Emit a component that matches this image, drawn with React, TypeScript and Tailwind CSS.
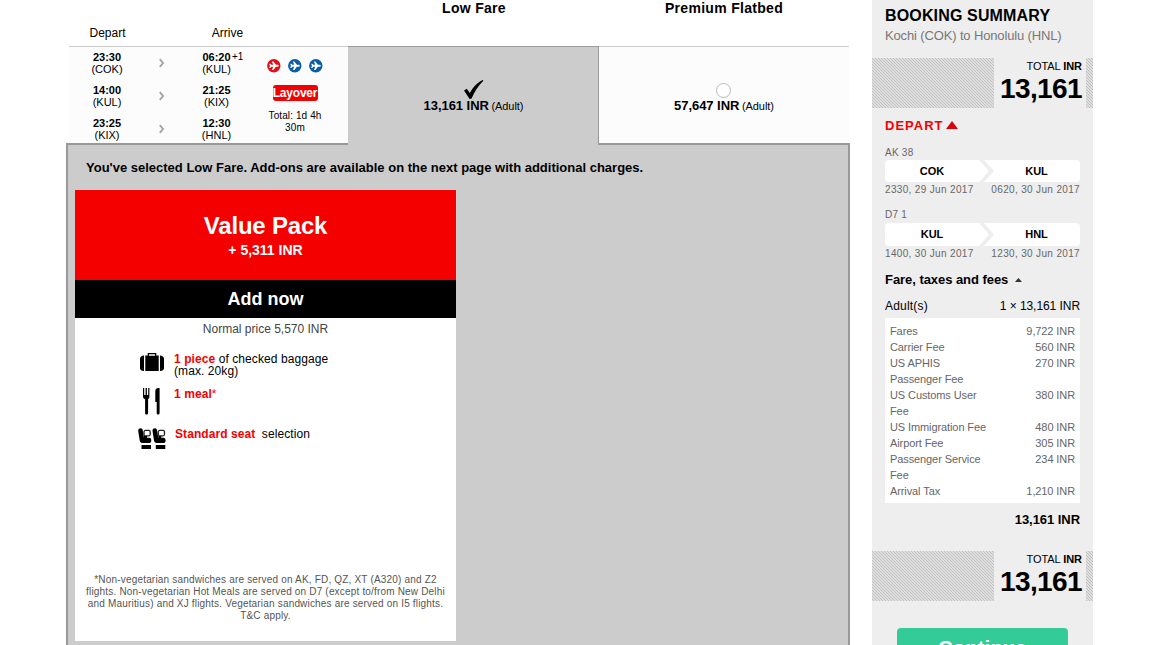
import React from 'react';
import clsx from 'clsx';

const FLIGHTS = [
  { depart: '23:30', from: '(COK)', arrive: '06:20', to: '(KUL)', extra: '+1' },
  { depart: '14:00', from: '(KUL)', arrive: '21:25', to: '(KIX)' },
  { depart: '23:25', from: '(KIX)', arrive: '12:30', to: '(HNL)' },
];

const FEES = [
  ['Fares', '9,722 INR'],
  ['Carrier Fee', '560 INR'],
  ['US APHIS Passenger Fee', '270 INR'],
  ['US Customs User Fee', '380 INR'],
  ['US Immigration Fee', '480 INR'],
  ['Airport Fee', '305 INR'],
  ['Passenger Service Fee', '234 INR'],
  ['Arrival Tax', '1,210 INR'],
];

const PlaneBadge: React.FC<{ color: string }> = ({ color }) => (
  <svg width="14" height="14" viewBox="0 0 14 14">
    <circle cx="6.8" cy="6.8" r="6.7" fill={color} />
    <path
      d="M11.800 6.800c0-.7-.6-1-1.300-1H8.900L6.400 2.600H4.900l1.300 3.200H4.300L3.300 4.700H2.200l.7 2.100-.7 2.100h1.100l1-1.100h1.900L4.900 11h1.500l2.500-3.200h1.600c.7 0 1.300-.3 1.300-1z"
      fill="#fff"
    />
  </svg>
);

const Chevron = () => (
  <svg width="6" height="10" viewBox="0 0 6 10" fill="none" stroke="#a4a4a4" strokeWidth="1.9">
    <path d="M.8 1.200L4 5 .8 8.800" />
  </svg>
);

const BagIcon = () => (
  <svg width="24" height="20" viewBox="0 0 24 20">
    <path d="M4 2.500v15.500C1.500 18 0 17 0 15V6c0-2 1.500-3.500 4-3.500zM20 2.500v15.500c2.500 0 4-1 4-3V6c0-2-1.500-3.500-4-3.500z" />
    <path d="M5.300 2.500H7.700V0h8.600v2.500h2.400V18H5.300zM9 1.300v1.500h6V1.300z" fillRule="evenodd" />
  </svg>
);

const MealIcon = () => (
  <svg width="18" height="27" viewBox="0 0 18 27">
    <path d="M0 0h1.200v7h1.400V0h1.300v7h1.300V0h1.200v8.500c0 1.500-.6 2.200-1.300 2.700V25c0 2-3 2-3 0V11.200C.8 10.700 0 10 0 8.500z" />
    <path d="M12.300 3c0-2 1.500-3 2.900-3h1.400v25c0 2-2.900 2-2.900 0V14h-1.400z" />
  </svg>
);

const Seat = () => (
  <>
    <path d="M.2 3C0-.2 4-.6 4.700 2L6 9.800h5.200c2.800 0 2.800 5.200 0 5.200H5.300c-2 0-3.200-.8-3.600-2.600z" />
    <rect x="6" y="2.400" width="6.200" height="5.400" rx="1.500" fill="none" stroke="#222" strokeWidth="1.300" />
    <path d="M6 8h3v2H6zM3.500 17H13v4H3.500z" />
  </>
);

const SeatIcon = () => (
  <svg width="29" height="21" viewBox="0 0 29 21">
    <Seat />
    <g transform="translate(14.300 0)">
      <Seat />
    </g>
  </svg>
);

const Hatch = () => (
  <svg className="absolute inset-0 size-full" shapeRendering="crispEdges">
    <defs>
      <pattern id="hatch" width="3" height="3" patternUnits="userSpaceOnUse">
        <rect width="3" height="3" fill="#dfdfdf" />
        <path d="M0 0h1v1H0zM1 1h1v1H1zM2 2h1v1H2z" fill="#c0c0c0" />
      </pattern>
    </defs>
    <rect width="100%" height="100%" fill="url(#hatch)" />
  </svg>
);

const TotalBand = () => (
  <div className="relative flex h-[50px] justify-end pr-[7px]">
    <Hatch />
    <div className="relative w-[92px] bg-[#eee] pr-1 text-right text-black">
      <p className="h-4 text-[11px] leading-4 tracking-[-0.05px]">
        TOTAL <b>INR</b>
      </p>
      <p className="text-[28px] font-bold leading-[30px] tracking-[-0.6px]">13,161</p>
    </div>
  </div>
);

const FareHeading: React.FC<{ children: React.ReactNode }> = ({ children }) => (
  <div className="w-[250px] text-center text-[14px] font-bold leading-4 tracking-[0.3px]">{children}</div>
);

const Price: React.FC<{ amount: string }> = ({ amount }) => (
  <p className="mt-px whitespace-nowrap text-[13px] font-bold leading-[14px] tracking-[-0.05px]">
    {amount} <span className="-ml-px text-[11px] font-normal">(Adult)</span>
  </p>
);

const FlightLeg: React.FC<{
  code: string;
  from: string;
  to: string;
  depart: string;
  arrive: string;
  tall?: boolean;
}> = ({ code, from, to, depart, arrive, tall }) => (
  <div className="text-[10px] text-[#666]">
    <p className={clsx('leading-[14px] tracking-[0.25px]', tall ? '-mt-px h-[15px]' : 'h-[14px]')}>{code}</p>
    <div
      className={clsx(
        'relative flex items-center rounded-sm bg-white text-[11px] font-bold text-black',
        tall ? 'h-[23px]' : 'h-[22px]',
      )}
    >
      <span className="w-[94px] text-center">{from}</span>
      <span className="ml-[14px] w-[87px] text-center">{to}</span>
      <svg
        className="absolute left-[94px] top-0 h-full"
        width="16"
        viewBox="0 0 16 22"
        preserveAspectRatio="none"
      >
        <path d="M0 0h5l10 11L5 22H0l10-11z" fill="#eee" />
      </svg>
    </div>
    <div className="flex h-[15px] justify-between whitespace-nowrap leading-[15px] tracking-[0.34px]">
      <span>{depart}</span>
      <span>{arrive}</span>
    </div>
  </div>
);

const Schedule = () => (
  <div className="flex h-[99px] w-[283px] border-b-2 border-[#999] pl-[3px]">
    <div className="flex flex-1 border-t border-[#ccc] bg-[#fcfcfc]">
      <div className="flex flex-col gap-[9px] pt-1 text-[11px] leading-3">
        {FLIGHTS.map((f) => (
          <div key={f.depart} className="flex h-6 items-center">
            <div className="w-[76px] text-center">
              <b className="block">{f.depart}</b>
              {f.from}
            </div>
            <div className="ml-[14px] w-[42px]">
              <Chevron />
            </div>
            <div className="relative w-[31px] text-center">
              <b className="block">{f.arrive}</b>
              {f.to}
              {f.extra && <span className="absolute left-[31px] top-0 text-[10px]">{f.extra}</span>}
            </div>
          </div>
        ))}
      </div>
      <div className="ml-7 flex w-[70px] flex-col items-center pt-3">
        <div className="flex gap-[7px]">
          <PlaneBadge color="#e01018" />
          <PlaneBadge color="#0a5ca8" />
          <PlaneBadge color="#0a5ca8" />
        </div>
        <span className="mt-3 h-4 w-[45px] rounded-[3px] bg-[#f50000] text-center text-[12px] font-bold leading-4 tracking-[-0.2px] text-white">
          Layover
        </span>
        <p className="mt-[9px] w-[60px] text-center text-[10px] leading-3 tracking-[0.1px]">Total: 1d 4h 30m</p>
      </div>
    </div>
  </div>
);

const ValuePack = () => (
  <div className="flex h-[451px] w-[381px] flex-col bg-white">
    <div className="h-[90px] bg-[#f50000] pt-[22px] text-center font-bold text-white">
      <h2 className="text-[24px] leading-7 tracking-[-0.2px]">Value Pack</h2>
      <p className="mt-0.5 text-[14px] leading-4">+ 5,311 INR</p>
    </div>
    <button type="button" className="h-[38px] bg-black text-[18px] font-bold text-white">
      Add now
    </button>
    <p className="mt-[3px] text-center text-[12px] leading-4 text-[#444]">Normal price 5,570 INR</p>
    <div className="ml-[63px] mt-4 grid grid-cols-[36px_1fr] text-[12px] leading-3 tracking-[0.08px]">
      <div className="h-[35px] pl-0.5">
        <BagIcon />
      </div>
      <p>
        <b className="text-[#f50000]">1 piece</b> of checked baggage
        <br />
        (max. 20kg)
      </p>
      <div className="h-10 pl-[5px]">
        <MealIcon />
      </div>
      <p className="text-[#f50000]">
        <b>1 meal</b>*
      </p>
      <div>
        <SeatIcon />
      </div>
      <p className="pl-px">
        <b className="mr-[3px] text-[#f50000]">Standard seat</b> selection
      </p>
    </div>
    <p className="mb-[19px] mt-auto whitespace-nowrap text-center text-[10px] leading-3 tracking-[0.18px] text-[#555]">
      *Non-vegetarian sandwiches are served on AK, FD, QZ, XT (A320) and Z2
      <br />
      flights. Non-vegetarian Hot Meals are served on D7 (except to/from New Delhi
      <br />
      and Mauritius) and XJ flights. Vegetarian sandwiches are served on I5 flights.
      <br />
      T&amp;C apply.
    </p>
  </div>
);

const FareTable = () => (
  <main className="flex w-[784px] flex-col">
    <div className="flex h-[46px] shrink-0">
      <div className="flex w-[283px] pl-[3px] pt-[25px] text-[12px] leading-4">
        <span className="w-[77px] text-center">Depart</span>
        <span className="ml-[43px] w-[77px] text-center">Arrive</span>
      </div>
      <FareHeading>Low Fare</FareHeading>
      <FareHeading>Premium Flatbed</FareHeading>
    </div>
    <div className="flex shrink-0">
      <Schedule />
      <div className="-ml-px flex w-[251px] flex-col items-center border-r border-t border-[#999] bg-[#ccc] pl-px pt-[33px]">
        <svg width="20" height="20" viewBox="0 0 20 20">
          <path d="M0 10.500l2.800-1.800 3 4.300C9.500 6.500 13.500 2.500 18.600 0l.8.800C14.500 5.500 10.500 11.500 7.600 18.500l-2 .5z" />
        </svg>
        <div className="-mt-0.5">
          <Price amount="13,161 INR" />
        </div>
      </div>
      <div className="flex h-[99px] flex-1 border-b-2 border-[#999] pr-px">
        <div className="flex flex-1 flex-col items-center border-t border-[#ccc] bg-[#fcfcfc] pt-9">
          <span className="mr-px size-[15px] rounded-full border-[1.5px] border-[#bbb] bg-white" />
          <Price amount="57,647 INR" />
        </div>
      </div>
    </div>
    <div className="flex-1 border-x-2 border-[#999] bg-[#ccc] pl-[7px]">
      <p className="ml-[11px] pt-[15px] text-[13px] font-bold leading-4">
        You've selected Low Fare. Add-ons are available on the next page with additional charges.
      </p>
      <div className="mt-[14px]">
        <ValuePack />
      </div>
    </div>
  </main>
);

const BookingSummary = () => (
  <aside className="ml-[22px] w-[221px] bg-[#eee]">
    <div className="h-[58px] pl-[13px] pt-[7px]">
      <h1 className="text-[16px] font-bold leading-[18px] tracking-[0.15px]">BOOKING SUMMARY</h1>
      <p className="mt-[3px] text-[13px] leading-4 tracking-[-0.14px] text-[#777]">Kochi (COK) to Honolulu (HNL)</p>
    </div>
    <TotalBand />
    <div className="px-[13px]">
      <div className="flex h-9 items-center gap-[3px] text-[13px] font-bold tracking-[1px] text-[#f50000]">
        DEPART
        <svg className="mb-0.5" width="12" height="8" viewBox="0 0 12 8">
          <path d="M0 8l6-8 6 8z" fill="#d8060c" />
        </svg>
      </div>
      <div className="flex flex-col gap-3 pt-0.5">
        <FlightLeg code="AK 38" from="COK" to="KUL" depart="2330, 29 Jun 2017" arrive="0620, 30 Jun 2017" />
        <FlightLeg code="D7 1" from="KUL" to="HNL" depart="1400, 30 Jun 2017" arrive="1230, 30 Jun 2017" tall />
      </div>
      <div className="mt-[11px] flex items-center gap-[7px] text-[13px] font-bold leading-4 tracking-[-0.05px]">
        Fare, taxes and fees
        <svg width="7" height="4" viewBox="0 0 7 4">
          <path d="M0 4l3.500-4L7 4z" fill="#333" />
        </svg>
      </div>
      <div className="mt-2.5 flex justify-between text-[12px] leading-4">
        <span className="tracking-[0.2px]">Adult(s)</span>
        <span className="tracking-[-0.06px]">1 × 13,161 INR</span>
      </div>
      <div className="mt-1 flex h-[185px] flex-col bg-white px-[5px] pt-[5px] text-[11px] leading-4 tracking-[-0.1px] text-[#666]">
        {FEES.map(([label, value]) => (
          <div key={label} className="flex justify-between">
            <span className="w-[102px]">{label}</span>
            <span>{value}</span>
          </div>
        ))}
      </div>
      <p className="mt-[9px] h-[39px] text-right text-[13px] font-bold leading-4 tracking-[-0.05px]">13,161 INR</p>
    </div>
    <TotalBand />
    <button
      type="button"
      className="ml-[25px] mt-[27px] flex h-11 w-[171px] justify-center rounded bg-[#33cc99] pt-2 text-[20px] font-bold leading-6 tracking-[0.2px] text-white"
    >
      Continue
    </button>
  </aside>
);

export default function App() {
  return (
    <div className="flex h-[645px] w-[1157px] overflow-hidden bg-white pl-[66px] font-['Liberation_Sans',Arial,sans-serif] text-black">
      <FareTable />
      <BookingSummary />
    </div>
  );
}
